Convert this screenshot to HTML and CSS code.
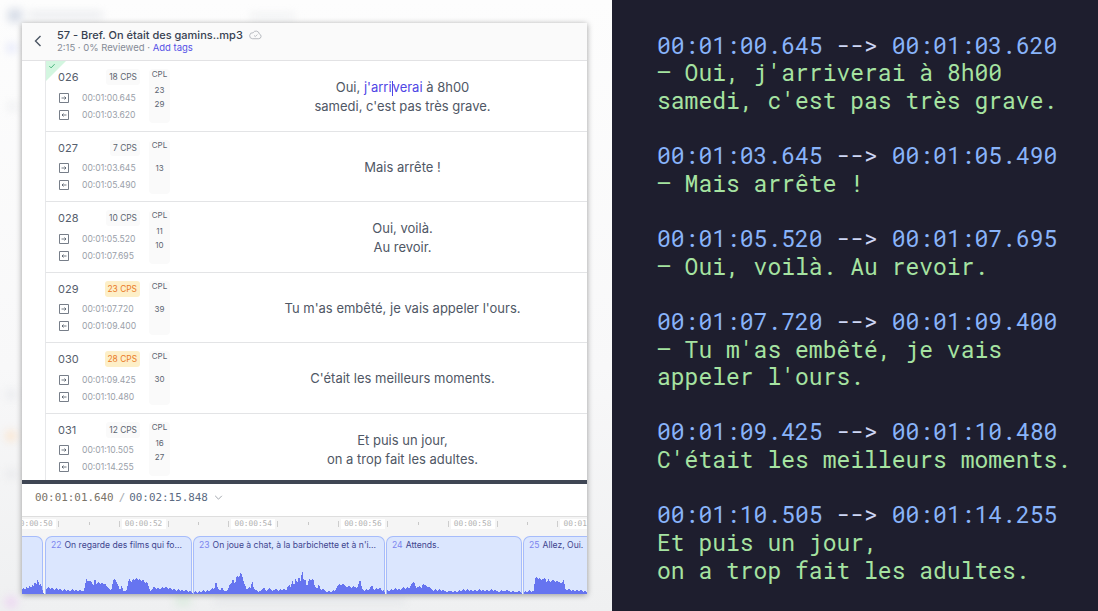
FILE: index.html
```html
<!DOCTYPE html>
<html lang="fr">
<head>
<meta charset="utf-8">
<title>Bref. On était des gamins</title>
<link rel="stylesheet" href="styles.css">
</head>
<body>
<main class="page">
  <section class="stage">
    <div class="backdrop" aria-hidden="true">
      <i class="blob b1"></i><i class="blob b2"></i><i class="blob b3"></i><i class="blob b4"></i><i class="blob b5"></i><i class="blob b6"></i><i class="blob b7"></i><i class="blob b8"></i><i class="blob b9"></i><i class="blob b10"></i><i class="blob b11"></i>
    </div>
    <article class="card">
      <header class="head">
        <svg class="back" viewBox="0 0 10 14"><path d="M7.5 2 2.5 7l5 5"/></svg>
        <div class="head-text">
          <div class="title">57 - Bref. On était des gamins..mp3
            <svg class="cloud" viewBox="0 0 14 10"><path d="M3.5 9h7a2.6 2.6 0 0 0 .6-5.1A3.6 3.6 0 0 0 4.400 2.600 3.200 3.200 0 0 0 3.500 9z"/><path d="M5.500 5.500l1.300 1.200 2.200-2.200"/></svg>
          </div>
          <div class="sub">2:15 · 0% Reviewed · <a class="link">Add tags</a></div>
        </div>
      </header>

      <div class="list">
        <div class="row">
          <span class="done"><svg viewBox="0 0 10 8"><path d="M1.500 4.200 3.800 6.500 8.500 1.500"/></svg></span>
          <div class="meta">
            <div class="meta-top"><span class="num">026</span><span class="cps">18 CPS</span></div>
            <div class="tc"><svg class="io" viewBox="0 0 10 10"><path d="M.5.5h9v9h-9z"/><path class="a" d="M2.500 5h4.500M5.500 3.500 7 5 5.500 6.500"/></svg>00:01:00.645</div>
            <div class="tc"><svg class="io" viewBox="0 0 10 10"><path d="M.5.5h9v9h-9z"/><path class="a" d="M7.500 5H3M4.500 3.500 3 5l1.500 1.500"/></svg>00:01:03.620</div>
          </div>
          <div class="cpl"><span class="cpl-h">CPL</span><div class="cpl-v"><span>23</span><span>29</span></div></div>
          <div class="sub-text"><p>Oui, <span class="hl">j'arri<span class="caret"></span>verai</span> à 8h00</p><p>samedi, c'est pas très grave.</p></div>
        </div>

        <div class="row">
          <div class="meta">
            <div class="meta-top"><span class="num">027</span><span class="cps">7 CPS</span></div>
            <div class="tc"><svg class="io" viewBox="0 0 10 10"><path d="M.5.5h9v9h-9z"/><path class="a" d="M2.500 5h4.500M5.500 3.500 7 5 5.500 6.500"/></svg>00:01:03.645</div>
            <div class="tc"><svg class="io" viewBox="0 0 10 10"><path d="M.5.5h9v9h-9z"/><path class="a" d="M7.500 5H3M4.500 3.500 3 5l1.500 1.500"/></svg>00:01:05.490</div>
          </div>
          <div class="cpl"><span class="cpl-h">CPL</span><div class="cpl-v"><span>13</span></div></div>
          <div class="sub-text"><p>Mais arrête !</p></div>
        </div>

        <div class="row">
          <div class="meta">
            <div class="meta-top"><span class="num">028</span><span class="cps">10 CPS</span></div>
            <div class="tc"><svg class="io" viewBox="0 0 10 10"><path d="M.5.5h9v9h-9z"/><path class="a" d="M2.500 5h4.500M5.500 3.500 7 5 5.500 6.500"/></svg>00:01:05.520</div>
            <div class="tc"><svg class="io" viewBox="0 0 10 10"><path d="M.5.5h9v9h-9z"/><path class="a" d="M7.500 5H3M4.500 3.500 3 5l1.500 1.500"/></svg>00:01:07.695</div>
          </div>
          <div class="cpl"><span class="cpl-h">CPL</span><div class="cpl-v"><span>11</span><span>10</span></div></div>
          <div class="sub-text"><p>Oui, voilà.</p><p>Au revoir.</p></div>
        </div>

        <div class="row">
          <div class="meta">
            <div class="meta-top"><span class="num">029</span><span class="cps warn">23 CPS</span></div>
            <div class="tc"><svg class="io" viewBox="0 0 10 10"><path d="M.5.5h9v9h-9z"/><path class="a" d="M2.500 5h4.500M5.500 3.500 7 5 5.500 6.500"/></svg>00:01:07.720</div>
            <div class="tc"><svg class="io" viewBox="0 0 10 10"><path d="M.5.5h9v9h-9z"/><path class="a" d="M7.500 5H3M4.500 3.500 3 5l1.500 1.500"/></svg>00:01:09.400</div>
          </div>
          <div class="cpl"><span class="cpl-h">CPL</span><div class="cpl-v"><span>39</span></div></div>
          <div class="sub-text"><p>Tu m'as embêté, je vais appeler l'ours.</p></div>
        </div>

        <div class="row">
          <div class="meta">
            <div class="meta-top"><span class="num">030</span><span class="cps warn">28 CPS</span></div>
            <div class="tc"><svg class="io" viewBox="0 0 10 10"><path d="M.5.5h9v9h-9z"/><path class="a" d="M2.500 5h4.500M5.500 3.500 7 5 5.500 6.500"/></svg>00:01:09.425</div>
            <div class="tc"><svg class="io" viewBox="0 0 10 10"><path d="M.5.5h9v9h-9z"/><path class="a" d="M7.500 5H3M4.500 3.500 3 5l1.500 1.500"/></svg>00:01:10.480</div>
          </div>
          <div class="cpl"><span class="cpl-h">CPL</span><div class="cpl-v"><span>30</span></div></div>
          <div class="sub-text"><p>C'était les meilleurs moments.</p></div>
        </div>

        <div class="row">
          <div class="meta">
            <div class="meta-top"><span class="num">031</span><span class="cps">12 CPS</span></div>
            <div class="tc"><svg class="io" viewBox="0 0 10 10"><path d="M.5.5h9v9h-9z"/><path class="a" d="M2.500 5h4.500M5.500 3.500 7 5 5.500 6.500"/></svg>00:01:10.505</div>
            <div class="tc"><svg class="io" viewBox="0 0 10 10"><path d="M.5.5h9v9h-9z"/><path class="a" d="M7.500 5H3M4.500 3.500 3 5l1.500 1.500"/></svg>00:01:14.255</div>
          </div>
          <div class="cpl"><span class="cpl-h">CPL</span><div class="cpl-v"><span>16</span><span>27</span></div></div>
          <div class="sub-text"><p>Et puis un jour,</p><p>on a trop fait les adultes.</p></div>
        </div>
      </div>

      <div class="player">
        <span class="cur">00:01:01.640</span><span class="sep">/</span><span class="tot">00:02:15.848</span>
        <svg class="caret-down" viewBox="0 0 10 6"><path d="M1 1l4 4 4-4"/></svg>
      </div>

      <div class="ruler">
        <div class="tg"><i></i><b></b><span>00:00:50</span><b></b></div>
        <div class="tg"><i></i><b></b><span>00:00:52</span><b></b></div>
        <div class="tg"><i></i><b></b><span>00:00:54</span><b></b></div>
        <div class="tg"><i></i><b></b><span>00:00:56</span><b></b></div>
        <div class="tg"><i></i><b></b><span>00:00:58</span><b></b></div>
        <div class="tg"><i></i><b></b><span>00:01:00</span><b></b></div>
      </div>

      <div class="track">
        <div class="clip c21"></div>
        <div class="clip c22"><em>22</em>On regarde des films qui fo...</div>
        <div class="clip c23"><em>23</em>On joue à chat, à la barbichette et à n'i...</div>
        <div class="clip c24"><em>24</em>Attends.</div>
        <div class="clip c25"><em>25</em>Allez, Oui.</div>
        <svg class="wave" viewBox="22 535 565 59" preserveAspectRatio="none"><path d="M22 593L22 589 24 586 25 589 27 585 28 588 30 584 31 587 33 583 34 586 35 579 36 585 37 582 38 577 39 584 41 582 42 587 43 590 44 593 46 593 46 589 48 586 50 588 52 587 54 589 56 587 58 589 60 588 62 590 64 588 66 590 68 589 70 590 72 588 74 590 76 589 78 590 80 589 82 590 84 590 85 585 86 579 87 577 88 582 89 578 90 581 91 579 92 583 94 584 95 575 96 583 98 581 100 583 102 581 104 584 105 582 107 586 109 588 111 590 113 581 114 578 116 580 118 584 120 589 122 584 123 590 125 590 127 589 128 581 130 577 131 582 133 578 135 580 136 576 138 579 140 577 141 581 143 578 145 582 147 580 149 586 150 590 152 589 154 585 156 588 158 586 160 589 162 586 164 587 166 585 168 588 170 587 172 589 174 587 176 590 178 588 180 590 182 589 184 590 186 589 188 591 190 590 192 592 193 593 194 593 195 590 197 592 199 590 201 591 203 589 205 591 207 589 209 591 211 588 213 586 214 590 216 580 218 588 220 590 222 586 224 590 226 590 228 589 230 583 232 581 233 577 235 583 237 574 239 577 241 571 243 578 245 584 247 589 249 586 251 588 252 578 254 588 256 589 258 591 260 590 262 589 264 586 266 590 268 588 270 587 272 590 274 589 276 587 278 590 280 588 282 590 284 587 286 590 288 585 290 583 291 589 292 578 294 585 296 576 297 583 299 575 301 581 302 567 304 582 305 577 307 586 309 578 311 580 313 577 315 586 317 588 319 583 321 589 323 588 325 590 327 591 329 590 331 591 333 589 335 590 337 586 339 583 341 584 343 582 345 585 347 586 349 584 351 587 353 585 355 586 357 587 359 582 360 578 362 587 364 590 366 588 368 590 370 587 372 584 374 589 376 587 378 589 380 586 382 590 384 588 385 593 387 593 387 589 389 590 391 588 393 589 395 587 397 589 399 588 401 589 403 586 405 588 407 586 409 588 411 584 413 581 415 583 416 587 418 586 420 584 421 588 423 583 425 584 427 586 429 586 431 587 433 590 435 588 437 590 439 588 441 590 443 589 445 590 447 591 449 590 451 590 453 591 455 590 457 591 459 589 461 590 463 588 465 590 467 588 469 590 471 589 473 590 475 589 477 590 479 588 481 590 483 589 485 590 487 589 489 590 491 588 493 590 495 589 497 590 499 591 501 589 503 590 505 590 507 589 509 590 511 591 513 590 515 591 517 591 519 590 521 592 523 593 524 593 525 590 527 591 529 589 531 591 533 590 534 590 535 577 537 575 538 578 540 576 541 579 543 578 544 577 546 579 547 583 548 577 550 581 552 580 553 578 555 581 557 580 559 581 561 582 563 581 564 577 565 588 567 589 569 587 571 590 573 589 575 590 577 589 579 590 581 589 583 591 585 590 587 591 587 593Z"/></svg>
      </div>
    </article>
  </section>

  <pre class="vtt"><span class="t">00:01:00.645</span> <span class="ar">--&gt;</span> <span class="t">00:01:03.620</span>
— Oui, j'arriverai à 8h00
samedi, c'est pas très grave.

<span class="t">00:01:03.645</span> <span class="ar">--&gt;</span> <span class="t">00:01:05.490</span>
— Mais arrête !

<span class="t">00:01:05.520</span> <span class="ar">--&gt;</span> <span class="t">00:01:07.695</span>
— Oui, voilà. Au revoir.

<span class="t">00:01:07.720</span> <span class="ar">--&gt;</span> <span class="t">00:01:09.400</span>
— Tu m'as embêté, je vais
appeler l'ours.

<span class="t">00:01:09.425</span> <span class="ar">--&gt;</span> <span class="t">00:01:10.480</span>
C'était les meilleurs moments.

<span class="t">00:01:10.505</span> <span class="ar">--&gt;</span> <span class="t">00:01:14.255</span>
Et puis un jour,
on a trop fait les adultes.</pre>
</main>
</body>
</html>
```

FILE: styles.css
```css
* { box-sizing: border-box; }
html, body { margin: 0; height: 100%; overflow: hidden; }
body { font-family: Inter, "Noto Sans", sans-serif; color: #4b5563; }
p { margin: 0; }

.page { display: flex; width: 1098px; height: 611px; }

.stage {
  position: relative;
  flex: 0 0 612px;
  background: linear-gradient(#fdfdfd 0, #f8f8f9 60%, #eff0f1 100%);
  padding: 23px 25px 17px 22px;
  overflow: hidden;
}
.backdrop { position: absolute; inset: 0; filter: blur(4px); }
.blob { position: absolute; display: block; border-radius: 3px; background: #e3e6ec; }
.b1 { left: 8px; top: 9px; width: 14px; height: 13px; background: #d5dbe6; }
.b2 { left: 28px; top: 12px; width: 75px; height: 6px; background: #e6e8ec; }
.b3 { left: 7px; top: 44px; width: 9px; height: 8px; background: #dfe3fa; }
.b4 { left: 8px; top: 103px; width: 9px; height: 7px; background: #ebecef; }
.b5 { left: 6px; top: 390px; width: 10px; height: 9px; background: #e9eaee; }
.b6 { left: 6px; top: 431px; width: 10px; height: 10px; background: #fbe4cd; }
.b7 { left: 7px; top: 470px; width: 9px; height: 8px; background: #e6e7ea; }
.b8 { left: 5px; top: 596px; width: 12px; height: 12px; border-radius: 50%; background: #ecd5f2; }
.b9 { left: 175px; top: 596px; width: 16px; height: 10px; background: #dcebe0; }
.b10 { left: 215px; top: 598px; width: 190px; height: 6px; background: #e4e6e9; }
.b11 { left: 250px; top: 14px; width: 45px; height: 5px; background: #eceef0; }

.card {
  position: relative;
  display: flex;
  flex-direction: column;
  width: 565px;
  height: 571px;
  background: #fff;
  box-shadow: 0 1px 6px rgba(0, 0, 0, .38);
}

.head {
  display: flex;
  align-items: center;
  height: 38px;
  flex: none;
  padding: 0 0 2px 11px;
  background: #fafafa;
  border-bottom: 1px solid #e2e2e4;
}
.back { width: 10px; height: 14px; margin-right: 14px; fill: none; stroke: #4b5563; stroke-width: 1.4; }
.title { font-size: 11px; font-weight: 500; line-height: 14px; color: #374151; display: flex; align-items: center; gap: 6px; }
.cloud { width: 13px; height: 10px; fill: none; stroke: #a3a7ae; stroke-width: .8; }
.sub { font-size: 9.500px; line-height: 12px; color: #858b96; }
.link { color: #5450e6; }

.list { flex: 0 0 419px; overflow: hidden; padding-left: 23px; }
.row {
  position: relative;
  display: flex;
  height: 70.500px;
  padding: 8px 0 0 12px;
  border-left: 1px solid #e7e8ea;
  border-bottom: 1px solid #e3e4e6;
}
.row:last-child { border-bottom: 0; }
.done {
  position: absolute;
  left: 0; top: 0;
  width: 0; height: 0;
  border-top: 20px solid #d3f6e0;
  border-right: 20px solid transparent;
}
.done svg { position: absolute; left: 2px; top: -18px; width: 8px; height: 6px; fill: none; stroke: #3cae74; stroke-width: 1.200; }

.meta { width: 82px; flex: none; }
.meta-top { display: flex; justify-content: space-between; align-items: center; height: 16px; margin-bottom: 4px; }
.num { font-size: 11px; color: #56606d; }
.cps {
  display: inline-flex; align-items: center;
  height: 16px; padding: 0 3px;
  border-radius: 3px;
  background: #fafafa;
  font-size: 8.400px; color: #5c6470;
}
.warn { background: #fdefc8; color: #ea7a26; }
.tc { display: flex; align-items: center; height: 17px; font-size: 8.600px; color: #9aa0a9; padding-left: 1px; }
.io { width: 10px; height: 10px; margin-right: 13px; fill: none; stroke: #777e89; stroke-width: 1; }
.io .a { stroke: #4b5563; stroke-width: .8; }

.cpl { flex: none; width: 21px; height: 54px; margin-left: 9px; border-radius: 4px; background: #fafafa; display: flex; flex-direction: column; align-items: center; font-size: 8px; color: #5c6470; }
.cpl-h { line-height: 11px; }
.cpl-v { flex: 1; display: flex; flex-direction: column; align-items: center; justify-content: center; gap: 4px; line-height: 10px; padding-bottom: 9px; }

.sub-text { flex: 1; display: flex; flex-direction: column; align-items: center; justify-content: center; margin: -6px 0 0 48px; font-size: 13px; line-height: 19px; color: #4f5765; }
.hl { color: #4f46e5; }
.caret { display: inline-block; width: 0; height: 15px; border-left: 1px solid #4f46e5; vertical-align: middle; }

.player {
  flex: 0 0 37px;
  display: flex;
  align-items: center;
  padding: 0 0 5px 13px;
  border-top: 4px solid #3f4654;
  border-bottom: 1px solid #dedede;
  font: 10.900px "DejaVu Sans Mono", "Liberation Mono", monospace;
}
.cur { color: #7a7368; }
.sep { margin: 0 4px 0 5px; color: #a7abb2; }
.tot { color: #5b6a82; }
.caret-down { width: 9px; height: 5px; margin-left: 6px; fill: none; stroke: #8f949c; stroke-width: 1; }

.ruler { flex: 0 0 19px; display: flex; overflow: hidden; background: #f5f5f5; padding-top: 2px; }
.tg { flex: 0 0 109.700px; display: flex; align-items: flex-start; justify-content: center; position: relative; }
.tg:first-child { margin-left: -43px; }
.tg i { position: absolute; left: 0; top: 3px; height: 3px; border-left: 1px solid #c8c8c8; }
.tg b { width: 1px; height: 6px; margin: 2px 2px 0; background: #cdcdcd; }
.tg span { width: 44px; height: 10px; background: #fff; font: 7.800px/10px "DejaVu Sans Mono", monospace; color: #b2b2b2; text-align: center; }

.track { position: relative; flex: 1; display: flex; gap: 1px; overflow: hidden; background: #f4f4f5; }
.clip {
  flex: none;
  padding: 3px 0 0 5px;
  background: #dbe6fe;
  border: 1px solid #a6bcfb;
  border-bottom: 0;
  border-radius: 7px 7px 0 0;
  font-size: 8.600px;
  line-height: 11px;
  color: #40458f;
  white-space: nowrap;
  overflow: hidden;
}
.clip em { font-style: normal; color: #7c84ee; margin-right: 3px; }
.c21 { width: 21px; border-left: 0; border-top-left-radius: 0; }
.c22 { width: 147px; margin-left: 1px; }
.c23 { width: 192px; }
.c24 { width: 136px; }
.c25 { width: 70px; border-right: 0; }
.wave { position: absolute; left: 0; top: 0; width: 565px; height: 59px; fill: #6674f0; shape-rendering: crispEdges; }

.vtt {
  flex: 1;
  margin: 0;
  padding: 31.720px 0 0 45px;
  background: #1e1e2e;
  font: 23px/27.620px "Roboto Mono", "DejaVu Sans Mono", monospace;
  color: #a6e3a1;
  overflow: hidden;
}
.t { color: #89b4fa; }
.ar { color: #cdd6f4; }
```
